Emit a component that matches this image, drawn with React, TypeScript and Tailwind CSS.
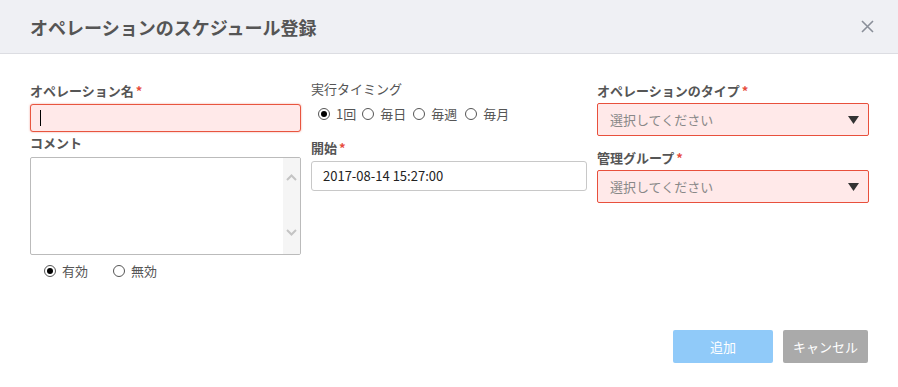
import React from "react";

const font = { fontFamily: '"Noto Sans CJK JP", "Noto Sans", sans-serif' };

function Radio({ checked, label, gap = "mr-[6px]" }: { checked?: boolean; label: string; gap?: string }) {
  return (
    <span className={`flex items-center ${gap}`}>
      <span className="w-[12px] h-[12px] rounded-full border border-[#555] flex items-center justify-center bg-white">
        {checked && <span className="w-[6px] h-[6px] rounded-full bg-black" />}
      </span>
      <span className="ml-[6px] text-[13px] leading-[18px] text-[#555]">{label}</span>
    </span>
  );
}

function Label({ text, req }: { text: string; req?: boolean }) {
  return (
    <div className="text-[13px] leading-[18px] font-bold text-[#555]">
      {text}
      {req && <span className="text-[#e74c3c] ml-[2px]">*</span>}
    </div>
  );
}

function Select() {
  return (
    <div className="h-[33px] border border-[#e8503c] bg-[#ffe9e9] rounded-[2px] flex items-center justify-between px-[12px]">
      <span className="text-[13px] text-[#888]">選択してください</span>
      <svg width="11" height="8" viewBox="0 0 11 8" className="mr-[-3px]">
        <path d="M0 0 L11 0 L5.5 8 Z" fill="#333" />
      </svg>
    </div>
  );
}

export default function App() {
  return (
    <div className="w-[898px] h-[387px] bg-white relative" style={font}>
      <div className="h-[54px] bg-[#eff0f4] border-b border-[#dcdde2] flex items-center justify-between pl-[30px] pr-[24px]">
        <div className="text-[18px] font-bold text-[#555] leading-none">オペレーションのスケジュール登録</div>
        <svg width="13" height="13" viewBox="0 0 13 13">
          <path d="M1 1 L12 12 M12 1 L1 12" stroke="#8a8f99" strokeWidth="1.6" />
        </svg>
      </div>

      <div className="pl-[30px] grid grid-cols-[271px_276px_272px] gap-x-[10px]">
        {/* column 1 */}
        <div className="pt-[28px]">
          <Label text="オペレーション名" req />
          <div className="mt-[4px] h-[28px] border border-[#e8553f] bg-[#ffe9e9] rounded-[3px] shadow-[0_0_2px_rgba(232,85,63,0.6)] flex items-center pl-[9px]">
            <span className="w-[1px] h-[16px] bg-black" />
          </div>
          <div className="mt-[2px]">
            <Label text="コメント" />
          </div>
          <div className="mt-[5px] h-[98px] border border-[#bbb] rounded-[2px] flex justify-end overflow-hidden">
            <div className="w-[17px] h-full bg-[#f5f5f5] flex flex-col items-center justify-between pt-[16px] pb-[18px]">
              <svg width="11" height="7" viewBox="0 0 11 7">
                <path d="M1 6 L5.5 1.5 L10 6" stroke="#c4c4c4" strokeWidth="2" fill="none" />
              </svg>
              <svg width="11" height="7" viewBox="0 0 11 7">
                <path d="M1 1 L5.5 5.5 L10 1" stroke="#c4c4c4" strokeWidth="2" fill="none" />
              </svg>
            </div>
          </div>
          <div className="mt-[7px] flex items-center pl-[14px]">
            <Radio checked label="有効" gap="mr-[25px]" />
            <Radio label="無効" />
          </div>
        </div>

        {/* column 2 */}
        <div className="pt-[26px]">
          <div className="text-[13px] leading-[18px] text-[#555]">実行タイミング</div>
          <div className="mt-[7px] flex items-center pl-[7px]">
            <Radio checked label="1回" />
            <Radio label="毎日" gap="mr-[7px]" />
            <Radio label="毎週" gap="mr-[8px]" />
            <Radio label="毎月" />
          </div>
          <div className="mt-[16px]">
            <Label text="開始" req />
          </div>
          <div className="mt-[4px] h-[30px] border border-[#c8c8c8] rounded-[3px] flex items-center pl-[11px] text-[13px] text-[#222]">
            2017-08-14 15:27:00
          </div>
        </div>

        {/* column 3 */}
        <div className="pt-[28px]">
          <Label text="オペレーションのタイプ" req />
          <div className="mt-[3px]">
            <Select />
          </div>
          <div className="mt-[13px]">
            <Label text="管理グループ" req />
          </div>
          <div className="mt-[3px]">
            <Select />
          </div>
        </div>
      </div>

      <div className="absolute right-[30px] top-[330px] flex gap-[10px]">
        <button className="w-[100px] h-[33px] rounded-[2px] bg-[#90caf9] text-white text-[13px]">追加</button>
        <button className="w-[85px] h-[33px] rounded-[2px] bg-[#aaaaaa] text-white text-[13px]">キャンセル</button>
      </div>
    </div>
  );
}
